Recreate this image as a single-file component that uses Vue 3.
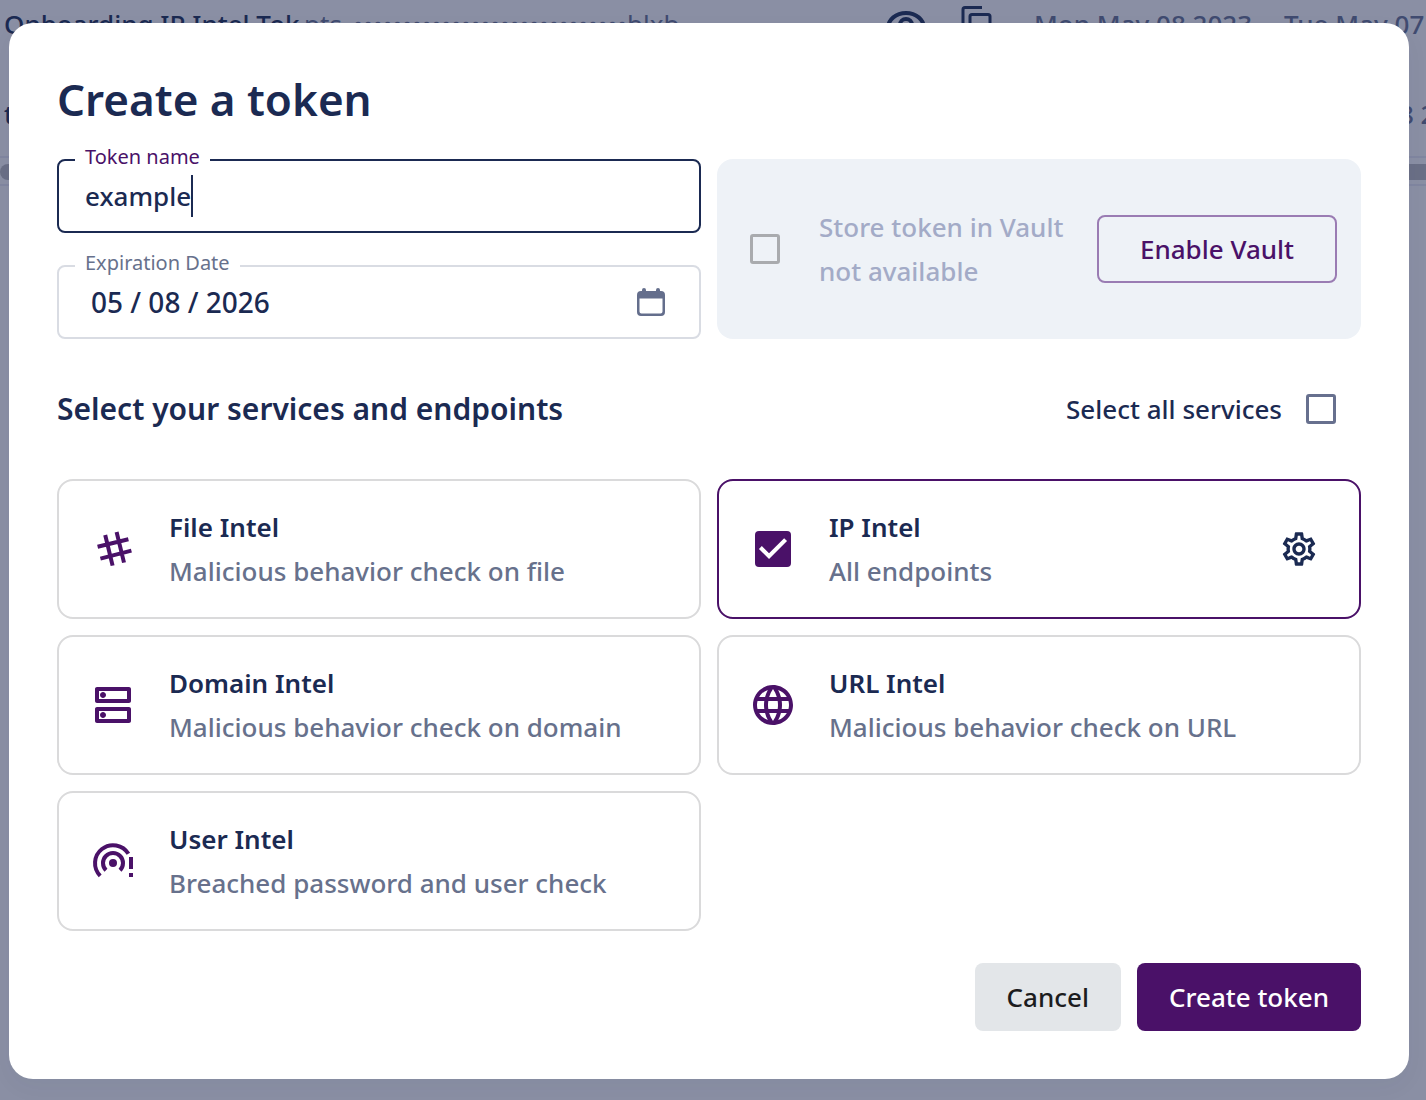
<script setup>
import { ref } from 'vue'

const tokenName = ref('example')
const expiration = ref('05 / 08 / 2026')
const storeInVault = ref(false)
const allServices = ref(false)

const services = ref([
  { id: 'file', name: 'File Intel', text: 'Malicious behavior check on file', selected: false },
  { id: 'ip', name: 'IP Intel', text: 'All endpoints', selected: true },
  { id: 'domain', name: 'Domain Intel', text: 'Malicious behavior check on domain', selected: false },
  { id: 'url', name: 'URL Intel', text: 'Malicious behavior check on URL', selected: false },
  { id: 'user', name: 'User Intel', text: 'Breached password and user check', selected: false }
])
</script>

<template>
  <div class="page">
    <div class="tokens" aria-hidden="true">
      <div class="token-row">
        <span class="token-title">Onboarding IP Intel Tok</span>
        <span class="token-value">pts_••••••••••••••••••••••••••••blxb</span>
        <svg class="row-icon eye" viewBox="0 0 40 40">
          <ellipse cx="20" cy="24" rx="18" ry="15" />
          <circle cx="20" cy="21" r="6" />
        </svg>
        <svg class="row-icon copy" viewBox="0 0 40 40">
          <path d="M5 28V5.500Q5 3.500 7 3.500H24" />
          <rect x="12" y="10.500" width="20" height="24" rx="2" />
        </svg>
        <span class="date">Mon May 08 2023</span>
        <span class="date">Tue May 07</span>
      </div>
      <div class="token-row">
        <span class="token-title">test</span>
        <span class="date trailing">Mon May 08 2023</span>
      </div>
      <div class="scroll-track"><div class="scroll-thumb"></div></div>
    </div>

    <div class="backdrop">
      <main class="dialog" role="dialog" aria-labelledby="dialog-title">
        <h1 id="dialog-title">Create a token</h1>

        <div class="columns">
          <div class="fields">
            <div class="field focused">
              <label for="token-name">Token name</label>
              <input id="token-name" v-model="tokenName" class="name-input" type="text" />
              <span class="caret"></span>
            </div>
            <div class="field">
              <label for="expiration">Expiration Date</label>
              <input id="expiration" v-model="expiration" class="date-input" type="text" />
              <button class="icon-button" type="button" aria-label="Choose date">
                <svg width="28" height="28" viewBox="0 0 28 28">
                  <path
                    fill="currentColor"
                    fill-rule="evenodd"
                    d="M5 2a2 2 0 0 1 4 0V3h10V2a2 2 0 0 1 4 0V3H24a4 4 0 0 1 4 4v17a4 4 0 0 1-4 4H4a4 4 0 0 1-4-4V7a4 4 0 0 1 4-4h1zM2.500 10.500V23.500a2 2 0 0 0 2 2h19a2 2 0 0 0 2-2V10.500z"
                  />
                </svg>
              </button>
            </div>
          </div>

          <div class="vault">
            <input id="vault" v-model="storeInVault" class="check muted" type="checkbox" disabled />
            <label for="vault">Store token in Vault not available</label>
            <button class="button outlined" type="button">Enable Vault</button>
          </div>
        </div>

        <div class="section-head">
          <h2>Select your services and endpoints</h2>
          <label for="all-services">Select all services</label>
          <input id="all-services" v-model="allServices" class="check" type="checkbox" />
        </div>

        <div class="services">
          <component
            :is="s.selected ? 'div' : 'button'"
            v-for="s in services"
            :key="s.id"
            class="card"
            :class="{ selected: s.selected }"
            :type="s.selected ? null : 'button'"
          >
            <span class="card-icon">
              <input v-if="s.selected" :id="s.id" v-model="s.selected" class="check filled" type="checkbox" />
              <svg v-else width="48" height="48" viewBox="0 0 24 24">
                <path
                  v-if="s.id === 'file'"
                  fill="none"
                  stroke="currentColor"
                  stroke-width="2"
                  d="M8.100 5l3.700 15.300M13.800 3.500l3.700 15.300M4.300 10.900L19.700 7.100M5.700 16.800l15.500-4"
                />
                <path
                  v-else-if="s.id === 'domain'"
                  fill="currentColor"
                  d="M19 15v4H5v-4h14m1-2H4c-.55 0-1 .45-1 1v6c0 .55.45 1 1 1h16c.55 0 1-.45 1-1v-6c0-.55-.45-1-1-1zM7 18.500c-.82 0-1.500-.67-1.500-1.500s.68-1.500 1.500-1.500 1.500.67 1.500 1.500-.67 1.500-1.500 1.500zM19 5v4H5V5h14m1-2H4c-.55 0-1 .45-1 1v6c0 .55.45 1 1 1h16c.55 0 1-.45 1-1V4c0-.55-.45-1-1-1zM7 8.500c-.82 0-1.500-.67-1.500-1.500S6.180 5.500 7 5.500s1.500.68 1.500 1.500S7.830 8.500 7 8.500z"
                />
                <path
                  v-else-if="s.id === 'url'"
                  fill="currentColor"
                  d="M11.990 2C6.470 2 2 6.480 2 12s4.470 10 9.990 10C17.520 22 22 17.520 22 12S17.520 2 11.990 2zm6.930 6h-2.950c-.32-1.250-.78-2.450-1.380-3.560 1.840.63 3.370 1.910 4.330 3.560zM12 4.040c.83 1.200 1.480 2.530 1.910 3.960h-3.820c.43-1.430 1.080-2.760 1.910-3.960zM4.260 14C4.100 13.360 4 12.690 4 12s.1-1.360.26-2h3.380c-.08.66-.14 1.320-.14 2s.06 1.340.14 2H4.260zm.82 2h2.950c.32 1.250.78 2.450 1.380 3.560-1.840-.63-3.370-1.900-4.330-3.560zm2.950-8H5.080c.96-1.660 2.490-2.930 4.330-3.560C8.810 5.550 8.350 6.750 8.030 8zM12 19.960c-.83-1.200-1.480-2.530-1.910-3.960h3.820c-.43 1.430-1.080 2.760-1.910 3.960zM14.340 14H9.660c-.09-.66-.16-1.320-.16-2s.07-1.350.16-2h4.680c.09.65.16 1.320.16 2s-.07 1.340-.16 2zm.25 5.560c.6-1.110 1.060-2.310 1.380-3.560h2.950c-.96 1.650-2.490 2.930-4.330 3.560zM16.360 14c.08-.66.14-1.320.14-2s-.06-1.340-.14-2h3.380c.16.64.26 1.310.26 2s-.1 1.360-.26 2h-3.380z"
                />
                <g v-else fill="none" stroke="currentColor" stroke-width="2">
                  <circle cx="12" cy="13" r="2" fill="currentColor" stroke="none" />
                  <path d="M8.500 16.600a5 5 0 1 1 7 0" />
                  <path d="M5.600 19.400A9 9 0 1 1 19.700 8.400" />
                  <path d="M21 10v6M21 18v2" />
                </g>
              </svg>
            </span>
            <component :is="s.selected ? 'label' : 'span'" class="card-text" :for="s.selected ? s.id : null">
              <strong>{{ s.name }}</strong>
              <span>{{ s.text }}</span>
            </component>
            <button v-if="s.selected" class="icon-button settings" type="button" aria-label="Configure endpoints">
              <svg width="40" height="40" viewBox="0 0 24 24">
                <path
                  fill="currentColor"
                  d="M19.430 12.980c.04-.32.07-.64.07-.98 0-.34-.03-.66-.07-.98l2.110-1.650c.19-.15.24-.42.12-.64l-2-3.460c-.09-.16-.26-.25-.44-.25-.06 0-.12.01-.17.03l-2.490 1c-.52-.4-1.080-.73-1.690-.98l-.38-2.650C14.460 2.180 14.250 2 14 2h-4c-.25 0-.46.18-.49.42l-.38 2.650c-.61.25-1.170.59-1.690.98l-2.490-1c-.06-.02-.12-.03-.18-.03-.17 0-.34.09-.43.25l-2 3.460c-.13.22-.07.49.12.64l2.110 1.650c-.04.32-.07.65-.07.98 0 .33.03.66.07.98l-2.110 1.650c-.19.15-.24.42-.12.64l2 3.460c.09.16.26.25.44.25.06 0 .12-.01.17-.03l2.490-1c.52.4 1.080.73 1.690.98l.38 2.650c.03.24.24.42.49.42h4c.25 0 .46-.18.49-.42l.38-2.650c.61-.25 1.170-.59 1.690-.98l2.490 1c.06.02.12.03.18.03.17 0 .34-.09.43-.25l2-3.460c.12-.22.07-.49-.12-.64l-2.110-1.650zm-1.980-1.710c.04.31.05.52.05.73 0 .21-.02.43-.05.73l-.14 1.130.89.7 1.080.84-.7 1.210-1.270-.51-1.040-.42-.9.68c-.43.32-.84.56-1.250.73l-1.060.43-.16 1.130-.2 1.350h-1.400l-.19-1.350-.16-1.130-1.060-.43c-.43-.18-.83-.41-1.230-.71l-.91-.7-1.060.43-1.270.51-.7-1.210 1.080-.84.89-.7-.14-1.130c-.03-.31-.05-.54-.05-.74s.02-.43.05-.73l.14-1.130-.89-.7-1.080-.84.7-1.210 1.270.51 1.040.42.9-.68c.43-.32.84-.56 1.250-.73l1.060-.43.16-1.130.2-1.350h1.390l.19 1.350.16 1.130 1.060.43c.43.18.83.41 1.230.71l.91.7 1.060-.43 1.270-.51.7 1.210-1.070.85-.89.7.14 1.130zM12 8c-2.210 0-4 1.790-4 4s1.790 4 4 4 4-1.790 4-4-1.790-4-4-4zm0 6c-1.100 0-2-.9-2-2s.9-2 2-2 2 .9 2 2-.9 2-2 2z"
                />
              </svg>
            </button>
          </component>
        </div>

        <div class="actions">
          <button class="button neutral" type="button">Cancel</button>
          <button class="button primary" type="button">Create token</button>
        </div>
      </main>
    </div>
  </div>
</template>

<style>
body {
  margin: 0;
  background: #8a8fa4;
}
</style>

<style scoped>
.page {
  position: relative;
  min-height: 100vh;
  overflow: hidden;
  font-family: "Noto Sans", sans-serif;
  font-size: 26px;
  font-weight: 500;
  line-height: 44px;
  color: #1b2a52;
}

.page *,
.page *::before {
  box-sizing: border-box;
}

button,
input {
  margin: 0;
  padding: 0;
  border: 0;
  background: none;
  font: inherit;
  color: inherit;
}

/* Token list under the dialog */
.tokens {
  position: absolute;
  inset: 0 0 auto 0;
  overflow: hidden;
  white-space: nowrap;
}

.token-row {
  display: flex;
  align-items: center;
  height: 48px;
  padding-left: 4px;
  color: #404b70;
}

.token-row + .token-row {
  margin-top: 40px;
  height: 68px;
  padding-bottom: 16px;
}

.token-title {
  flex: none;
  width: 300px;
  color: #1b2a52;
}

.token-value {
  flex: none;
  width: 582px;
  font-weight: 400;
}

.row-icon {
  flex: none;
  width: 40px;
  height: 40px;
  fill: none;
  stroke: #1b2a52;
  stroke-width: 4;
}

.copy {
  margin: 0 36px 0 32px;
  stroke-width: 3;
}

.date {
  flex: none;
  width: 250px;
}

.trailing {
  margin-left: 958px;
}

.scroll-track {
  height: 30px;
  padding: 6px 0;
  border: solid #8086a0;
  border-width: 2px 0;
}

.scroll-thumb {
  height: 16px;
  border-radius: 8px 0 0 8px;
  background: #6a6f86;
}

/* Dialog */
.backdrop {
  position: relative;
  padding: 23px 17px 21px 9px;
}

.dialog {
  padding: 48px;
  border-radius: 24px;
  background: #fff;
  box-shadow: 0 8px 24px rgba(27, 42, 82, 0.04);
}

h1,
h2 {
  margin: 0;
  font-weight: 600;
}

h1 {
  margin-bottom: 32px;
  font-size: 44px;
  line-height: 56px;
}

.columns,
.services {
  display: grid;
  grid-template-columns: 1fr 1fr;
  gap: 16px;
}

.fields {
  display: grid;
  gap: 32px;
}

.field {
  position: relative;
  display: flex;
  align-items: center;
  height: 74px;
  padding: 0 26px;
  border: 2px solid #d9dce3;
  border-radius: 8px;
}

.field.focused {
  border-color: #1b2a52;
}

.field label {
  position: absolute;
  top: -18px;
  left: 16px;
  padding: 0 10px;
  background: #fff;
  font-size: 20px;
  font-weight: 400;
  line-height: 28px;
  color: #67718c;
}

.field.focused label {
  color: #4a1168;
}

.name-input {
  field-sizing: content;
  outline: none;
  caret-color: transparent;
}

.caret {
  width: 2px;
  height: 42px;
  background: #1b2a52;
}

.date-input {
  flex: 1;
  min-width: 0;
  padding-left: 6px;
  font-size: 28px;
}

.icon-button {
  display: flex;
  flex: none;
  margin-right: 8px;
  color: #646e8c;
}

.icon-button.settings {
  margin-right: 10px;
  color: #1b2a52;
}

.vault {
  display: flex;
  align-items: center;
  padding: 0 24px 0 33px;
  border-radius: 16px;
  background: #eef2f7;
}

.vault label {
  flex: 1;
  padding: 0 24px 0 39px;
  color: #a3abc7;
}

.check {
  display: block;
  flex: none;
  width: 30px;
  height: 30px;
  border: 3px solid #67708e;
  border-radius: 3px;
  appearance: none;
}

.check.muted {
  border-color: #a9abae;
}

.check.filled {
  width: 36px;
  height: 36px;
  border: 0;
  border-radius: 4px;
  background: #4a1168;
}

.check.filled:checked::before {
  content: "";
  display: block;
  height: 100%;
  background: #fff;
  clip-path: polygon(39% 78%, 11% 50%, 19% 42%, 39% 62%, 81% 20%, 89% 28%);
}

.section-head {
  display: flex;
  align-items: center;
  margin: 48px 0;
  padding-right: 25px;
}

.section-head h2 {
  flex: 1;
  font-size: 30px;
}

.section-head label {
  padding-right: 24px;
}

.card {
  display: flex;
  align-items: center;
  gap: 32px;
  height: 140px;
  padding: 0 30px;
  border: 2px solid #dadadb;
  border-radius: 16px;
  text-align: left;
}

.card.selected {
  border-color: #4a1168;
}

.card-icon {
  display: grid;
  flex: none;
  place-items: center;
  width: 48px;
  height: 48px;
  color: #4a1168;
}

.card-text {
  flex: 1;
  min-width: 0;
  color: #67718c;
}

.card-text strong,
.card-text span {
  display: block;
}

.card-text strong {
  font-weight: 600;
  color: #1b2a52;
}

.button {
  flex: none;
  height: 68px;
  padding: 0 32px;
  border-radius: 8px;
}

.outlined {
  width: 240px;
  border: 2px solid #9a7cb3;
  color: #4a1168;
}

.actions {
  display: flex;
  justify-content: flex-end;
  gap: 16px;
  margin-top: 32px;
}

.neutral {
  background: #e3e6e9;
  color: #1c1c1e;
}

.primary {
  background: #4a1168;
  color: #fff;
}
</style>
